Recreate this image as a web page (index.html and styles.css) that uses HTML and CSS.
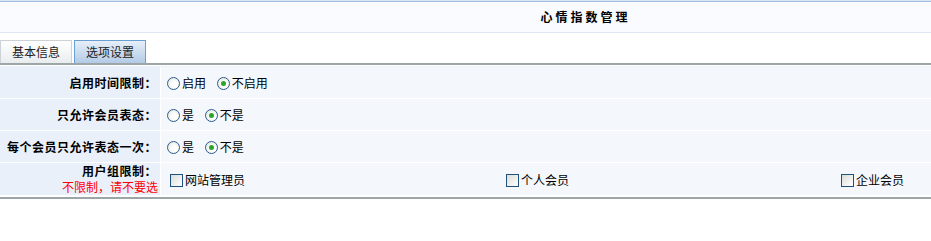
FILE: index.html
```html
<!DOCTYPE html>
<html>
    <head>
        <meta charset="utf-8">
        <title>心情指数管理</title>
        <link rel="stylesheet" href="styles.css">
    </head>
    <body>
        <div class="topline"></div>
        <div class="header"><span class="title">心情指数管理</span></div>
        <div class="tabs">
            <span class="tab">基本信息</span>
            <span class="tab tab-on">选项设置</span>
        </div>
        <div class="gap"></div>
        <table class="form">
            <tr>
                <td class="label"><b>启用时间限制：</b></td>
                <td class="value">
                    <span class="radio"></span><span class="opt">启用</span>
                    <span class="radio checked"></span><span class="opt">不启用</span>
                </td>
            </tr>
            <tr>
                <td class="label"><b>只允许会员表态：</b></td>
                <td class="value">
                    <span class="radio"></span><span class="opt">是</span>
                    <span class="radio checked"></span><span class="opt">不是</span>
                </td>
            </tr>
            <tr>
                <td class="label"><b>每个会员只允许表态一次：</b></td>
                <td class="value">
                    <span class="radio"></span><span class="opt">是</span>
                    <span class="radio checked"></span><span class="opt">不是</span>
                </td>
            </tr>
            <tr>
                <td class="label label2"><b>用户组限制：</b><br><span class="red">不限制，请不要选</span></td>
                <td class="value">
                    <div class="groups">
                        <span><span class="check"></span>网站管理员</span>
                        <span><span class="check"></span>个人会员</span>
                        <span><span class="check"></span>企业会员</span>
                    </div>
                </td>
            </tr>
        </table>
        <div class="bottomline"></div>
    </body>
</html>
```

FILE: styles.css
```css
body {
    margin: 0;
    width: 931px;
    font-family: "Noto Sans CJK SC", sans-serif;
    font-size: 12px;
    color: #000;
    background-color: #fff;
    text-spacing-trim: space-all;
}
.topline {
    height: 1px;
    border-top: 1px solid #dbe6f3;
    background-color: #9dbce0;
}
.header {
    height: 30px;
    line-height: 30px;
    padding-left: 240px;
    text-align: center;
    background-color: #f9fbfe;
    border-bottom: 1px solid #dde6f2;
}
.title {
    font-weight: bold;
    letter-spacing: 3px;
}
.tabs {
    height: 24px;
    padding-top: 6px;
    display: flex;
    align-items: flex-end;
    gap: 2px;
    border-bottom: 2px solid #9ca6a6;
}
.tab {
    width: 70px;
    height: 22px;
    line-height: 22px;
    text-align: center;
    color: #222;
    border: 1px solid #cdd2d6;
    border-bottom: none;
    background: linear-gradient(#ffffff, #e9ecee);
}
.tab-on {
    border-color: #6a9fd2;
    background: linear-gradient(#e6eff9, #b3cbe7);
}
.gap {
    height: 1px;
    border-bottom: 1px solid #eef2f8;
}
.form {
    width: 931px;
    border-collapse: collapse;
    border-bottom: 1px solid #dbe8f4;
}
.form td {
    height: 31px;
    padding: 0;
    border-bottom: 1px solid #fff;
}
.label {
    width: 157px;
    padding-right: 3px !important;
    text-align: right;
    background-color: #e9f0fa;
    border-right: 1px solid #fff;
}
.label b {
    letter-spacing: 0.5px;
}
.label2 {
    height: 32px !important;
    line-height: 16px;
}
.red {
    color: #f00;
    margin-right: -1px;
}
.value {
    padding-left: 6px !important;
    background-color: #f4f7fc;
}
.radio {
    display: inline-block;
    width: 11px;
    height: 11px;
    margin-right: 2px;
    vertical-align: -2px;
    border: 1px solid #2d5c8c;
    border-radius: 50%;
    background: radial-gradient(circle at 60% 60%, #ffffff 30%, #dcdcd4);
    position: relative;
}
.radio.checked::after {
    content: "";
    position: absolute;
    left: 3px;
    top: 3px;
    width: 5px;
    height: 5px;
    border-radius: 50%;
    background-color: #2aa52a;
}
.opt {
    margin-right: 8px;
}
.groups {
    display: grid;
    grid-template-columns: 336px 335px auto;
    padding-left: 3px;
    padding-top: 1px;
}
.check {
    display: inline-block;
    width: 11px;
    height: 11px;
    margin-right: 2px;
    vertical-align: -2px;
    border: 1px solid #1c5180;
    background: linear-gradient(135deg, #dcdcd6, #ffffff);
}
.bottomline {
    height: 2px;
    margin-top: 1px;
    background-color: #9ca6a6;
}
```
